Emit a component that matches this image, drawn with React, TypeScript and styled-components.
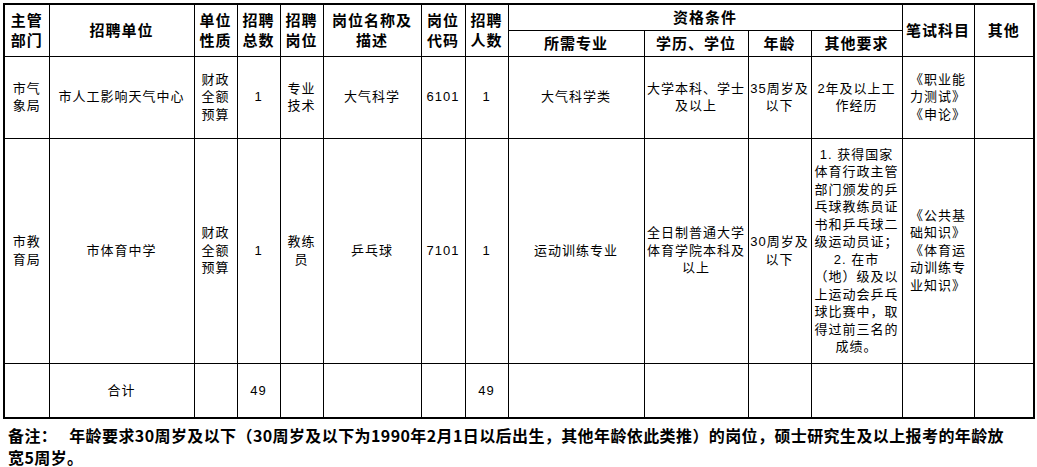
import React from 'react';
import styled, { createGlobalStyle } from 'styled-components';

const GlobalStyle = createGlobalStyle`
  html, body {
    margin: 0;
    padding: 0;
    background: #ffffff;
  }
  body {
    font-family: "Liberation Sans", "Noto Sans CJK SC", sans-serif;
    color: #000000;
  }
`;

const Page = styled.div`
  width: 1037px;
  padding: 3px 0 0 3px;
  box-sizing: border-box;
`;

const Sheet = styled.table`
  border-collapse: collapse;
  table-layout: fixed;
  width: 1031px;
  border: 2px solid #000;
`;

const Row = styled.tr<{ $h: number }>`
  height: ${p => p.$h}px;
`;

const HeadCell = styled.th`
  border: 1px solid #000;
  padding: 0;
  font-family: "Noto Sans CJK SC", sans-serif;
  font-weight: 700;
  font-size: 15px;
  line-height: 20px;
  letter-spacing: 1px;
  text-align: center;
  vertical-align: middle;
  white-space: nowrap;
`;

const Cell = styled.td`
  border: 1px solid #000;
  padding: 0;
  font-size: 13px;
  line-height: 17.5px;
  letter-spacing: 1px;
  text-align: center;
  vertical-align: middle;
  white-space: nowrap;
`;

const Note = styled.p`
  margin: 5px 0 0 5px;
  font-family: "Noto Sans CJK SC", sans-serif;
  font-weight: 700;
  font-size: 16px;
  line-height: 22px;
  letter-spacing: 0.4px;
  white-space: nowrap;
`;

const NoteGap = styled.span`
  display: inline-block;
  width: 12px;
`;

const widths = [45, 145, 43, 43, 43, 98, 44, 43, 136, 104, 63, 91, 72, 60];

const Lines: React.FC<{ text: string }> = ({ text }) => (
  <>
    {text.split('\n').map((line, i) => (
      <React.Fragment key={i}>
        {i > 0 && <br />}
        {line}
      </React.Fragment>
    ))}
  </>
);

const rows = [
  {
    h: 82,
    cells: [
      '市气\n象局',
      '市人工影响天气中心',
      '财政\n全额\n预算',
      '1',
      '专业\n技术',
      '大气科学',
      '6101',
      '1',
      '大气科学类',
      '大学本科、学士\n及以上',
      '35周岁及\n以下',
      '2年及以上工\n作经历',
      '《职业能\n力测试》\n《申论》',
      '',
    ],
  },
  {
    h: 225,
    cells: [
      '市教\n育局',
      '市体育中学',
      '财政\n全额\n预算',
      '1',
      '教练\n员',
      '乒乓球',
      '7101',
      '1',
      '运动训练专业',
      '全日制普通大学\n体育学院本科及\n以上',
      '30周岁及\n以下',
      '1. 获得国家\n体育行政主管\n部门颁发的乒\n乓球教练员证\n书和乒乓球二\n级运动员证；\n2. 在市\n（地）级及以\n上运动会乒乓\n球比赛中，取\n得过前三名的\n成绩。',
      '《公共基\n础知识》\n《体育运\n动训练专\n业知识》',
      '',
    ],
  },
  {
    h: 55,
    cells: ['', '合计', '', '49', '', '', '', '49', '', '', '', '', '', ''],
  },
];

export default function App() {
  return (
    <Page>
      <GlobalStyle />
      <Sheet>
        <colgroup>
          {widths.map((w, i) => (
            <col key={i} width={w} />
          ))}
        </colgroup>
        <thead>
          <Row $h={26}>
            <HeadCell rowSpan={2}>主管<br />部门</HeadCell>
            <HeadCell rowSpan={2}>招聘单位</HeadCell>
            <HeadCell rowSpan={2}>单位<br />性质</HeadCell>
            <HeadCell rowSpan={2}>招聘<br />总数</HeadCell>
            <HeadCell rowSpan={2}>招聘<br />岗位</HeadCell>
            <HeadCell rowSpan={2}>岗位名称及<br />描述</HeadCell>
            <HeadCell rowSpan={2}>岗位<br />代码</HeadCell>
            <HeadCell rowSpan={2}>招聘<br />人数</HeadCell>
            <HeadCell colSpan={4}>资格条件</HeadCell>
            <HeadCell rowSpan={2}>笔试科目</HeadCell>
            <HeadCell rowSpan={2}>其他</HeadCell>
          </Row>
          <Row $h={26}>
            <HeadCell>所需专业</HeadCell>
            <HeadCell>学历、学位</HeadCell>
            <HeadCell>年龄</HeadCell>
            <HeadCell>其他要求</HeadCell>
          </Row>
        </thead>
        <tbody>
          {rows.map((row, r) => (
            <Row key={r} $h={row.h}>
              {row.cells.map((c, i) => (
                <Cell key={i}>
                  <Lines text={c} />
                </Cell>
              ))}
            </Row>
          ))}
        </tbody>
      </Sheet>
      <Note>
        备注：<NoteGap />年龄要求30周岁及以下（30周岁及以下为1990年2月1日以后出生，其他年龄依此类推）的岗位，硕士研究生及以上报考的年龄放
        <br />
        宽5周岁。
      </Note>
    </Page>
  );
}
